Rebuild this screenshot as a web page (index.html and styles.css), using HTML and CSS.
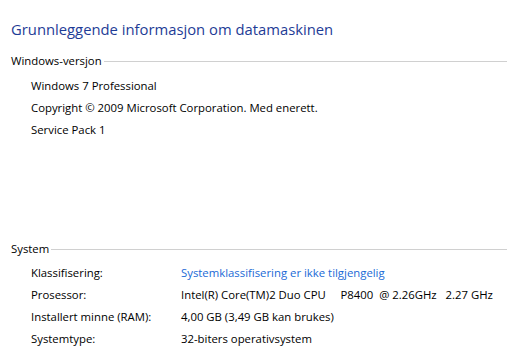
FILE: index.html
```html
<!DOCTYPE html>
<html lang="no">
<head>
    <meta charset="UTF-8">
    <title>System</title>
    <link rel="stylesheet" href="styles.css">
</head>
<body>
    <h1 class="title">Grunnleggende informasjon om datamaskinen</h1>

    <div class="section">
        <div class="section-head"><span>Windows-versjon</span></div>
        <div class="rows">
            <div class="row">Windows 7 Professional</div>
            <div class="row">Copyright © 2009 Microsoft Corporation. Med enerett.</div>
            <div class="row">Service Pack 1</div>
        </div>
    </div>

    <div class="section section-system">
        <div class="section-head"><span>System</span></div>
        <div class="rows grid">
            <div class="label">Klassifisering:</div>
            <div class="value"><a href="#" class="link">Systemklassifisering er ikke tilgjengelig</a></div>
            <div class="label">Prosessor:</div>
            <div class="value pre">Intel(R) Core(TM)2 Duo CPU     P8400  @ 2.26GHz   2.27 GHz</div>
            <div class="label">Installert minne (RAM):</div>
            <div class="value">4,00 GB (3,49 GB kan brukes)</div>
            <div class="label">Systemtype:</div>
            <div class="value">32-biters operativsystem</div>
        </div>
    </div>
</body>
</html>
```

FILE: styles.css
```css
body {
    margin: 0;
    padding: 0 0 0 11px;
    background: #fff;
    color: #000;
    font-family: "Open Sans", "Noto Sans", sans-serif;
    font-size: 11.35px;
}
.title {
    margin: 18px 0 11px 0;
    font-size: 14.8px;
    font-weight: normal;
    line-height: 22px;
    color: #1e3c96;
}
.section-head {
    display: flex;
    align-items: center;
    line-height: 20px;
}
.section-head::after {
    content: "";
    flex: 1;
    height: 1px;
    margin-left: 2px;
    background-color: #d0d0d0;
}
.rows {
    margin-top: 4px;
    padding-left: 20px;
}
.row {
    line-height: 22px;
}
.section-system {
    margin-top: 98px;
}
.section-system .rows {
    margin-top: 3px;
}
.grid {
    display: grid;
    grid-template-columns: 150px 1fr;
    line-height: 22px;
}
.pre {
    white-space: pre;
}
.link {
    color: #1a6ad6;
    text-decoration: none;
}
```
